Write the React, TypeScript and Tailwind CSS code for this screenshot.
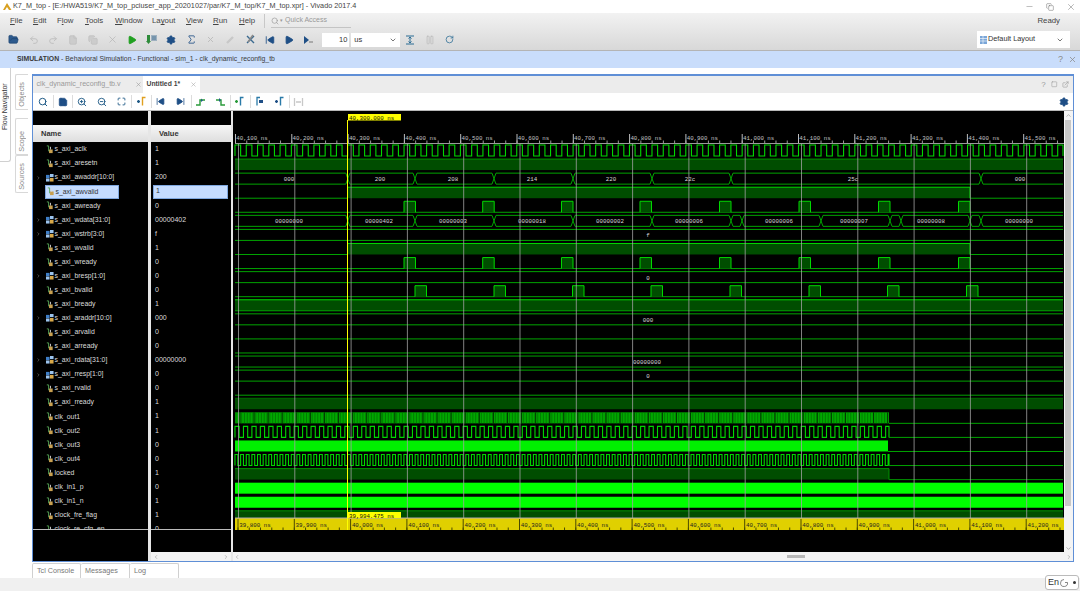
import React from "react";
import { Search, Save, ZoomIn, ZoomOut, Maximize, FolderOpen, Undo2, Redo2, File, Copy, X, Play, Settings, Sigma, ChevronDown, ChevronRight, ChevronLeft, ChevronUp, SkipBack, SkipForward, RotateCw, Pause, Minus, Square, ExternalLink } from "lucide-react";

type Row = { n: string; v: string; bus?: boolean; sel?: boolean };
const rows: Row[] = [
  { n: "s_axi_aclk", v: "1" }, { n: "s_axi_aresetn", v: "1" }, { n: "s_axi_awaddr[10:0]", v: "200", bus: true },
  { n: "s_axi_awvalid", v: "1", sel: true }, { n: "s_axi_awready", v: "0" }, { n: "s_axi_wdata[31:0]", v: "00000402", bus: true },
  { n: "s_axi_wstrb[3:0]", v: "f", bus: true }, { n: "s_axi_wvalid", v: "1" }, { n: "s_axi_wready", v: "0" },
  { n: "s_axi_bresp[1:0]", v: "0", bus: true }, { n: "s_axi_bvalid", v: "0" }, { n: "s_axi_bready", v: "1" },
  { n: "s_axi_araddr[10:0]", v: "000", bus: true }, { n: "s_axi_arvalid", v: "0" }, { n: "s_axi_arready", v: "0" },
  { n: "s_axi_rdata[31:0]", v: "00000000", bus: true }, { n: "s_axi_rresp[1:0]", v: "0", bus: true }, { n: "s_axi_rvalid", v: "0" },
  { n: "s_axi_rready", v: "1" }, { n: "clk_out1", v: "1" }, { n: "clk_out2", v: "1" }, { n: "clk_out3", v: "0" },
  { n: "clk_out4", v: "0" }, { n: "locked", v: "1" }, { n: "clk_in1_p", v: "0" }, { n: "clk_in1_n", v: "1" },
  { n: "clock_fre_flag", v: "1" }, { n: "clock_re_cfg_en", v: "0" },
];

const SigIcon = ({ bus }: { bus?: boolean }) =>
  bus ? (
    <svg width="8" height="8" viewBox="0 0 9 9" className="shrink-0">
      <rect x="0" y="1" width="4" height="3.5" fill="#3f7fc8" />
      <rect x="4.5" y="0" width="4" height="3.5" fill="#9cc4ee" />
      <rect x="0" y="5" width="4" height="3.5" fill="#9cc4ee" />
      <rect x="4.5" y="4.5" width="4" height="4" fill="#d8a848" />
    </svg>
  ) : (
    <svg width="7" height="9" viewBox="0 0 7 10" className="shrink-0">
      <path d="M0.5 1H2.5V7" stroke="#58a858" strokeWidth="1" fill="none" />
      <rect x="3" y="5" width="4" height="4" fill="#c8a050" />
      <rect x="4" y="2" width="1" height="3" fill="#dddddd" />
    </svg>
  );

const xs = (s: number, e: number, step: number) => {
  const o: number[] = [];
  for (let x = s; x < e; x += step) o.push(x);
  return o;
};
const clock = (start: number, end: number, period: number, hi: number, lo: number) => {
  let d = `M${start} ${lo}`;
  for (let x = start; x < end; x += period) {
    const m = Math.min(x + period / 2, end);
    const n = Math.min(x + period, end);
    d += `L${x} ${hi}L${m} ${hi}L${m} ${lo}L${n} ${lo}`;
  }
  return d;
};

const L = 235, R = 1063, G = "#00a400", B = "#00d800", FILL = "#004d00";
const MONO = "'Liberation Mono', monospace";
const hiY = (i: number) => 145 + 14.07 * i;
const loY = (i: number) => 156 + 14.07 * i;

const Low = ({ i, a = L, b = R }: { i: number; a?: number; b?: number }) => (
  <line x1={a} x2={b} y1={loY(i)} y2={loY(i)} stroke={G} strokeWidth="1" />
);
const HighFill = ({ i, a, b, c = B }: { i: number; a: number; b: number; c?: string }) => (
  <>
    <rect x={a} y={hiY(i)} width={b - a} height={11} fill={FILL} />
    <line x1={a} x2={b} y1={hiY(i)} y2={hiY(i)} stroke={c} strokeWidth="1" />
  </>
);
const Valid = ({ i }: { i: number }) => (
  <>
    <Low i={i} a={L} b={347.5} />
    <line x1="347.5" x2="347.5" y1={hiY(i)} y2={loY(i)} stroke={B} />
    <HighFill i={i} a={347.5} b={970} />
    <line x1="970" x2="970" y1={hiY(i)} y2={loY(i)} stroke={B} />
    <Low i={i} a={970} b={R} />
  </>
);
const Pulses = ({ i, at }: { i: number; at: number[] }) => (
  <>
    <Low i={i} />
    {at.map((x) => (
      <g key={x}>
        <rect x={x} y={hiY(i)} width={11.5} height={11} fill={FILL} />
        <path d={`M${x} ${loY(i)}V${hiY(i)}H${x + 11.5}V${loY(i)}`} fill="none" stroke={B} />
      </g>
    ))}
  </>
);
const Bus = ({ i, t, labels }: { i: number; t: number[]; labels: [number, string][] }) => {
  const h = hiY(i), l = loY(i), pts = [L, ...t, R];
  const w = 2;
  return (
    <>
      {pts.slice(0, -1).map((a, k) => {
        const b = pts[k + 1];
        const a2 = k === 0 ? a : a + w, b2 = k === pts.length - 2 ? b : b - w;
        return <path key={a} d={`M${a2} ${h}H${b2}M${a2} ${l}H${b2}`} stroke={G} fill="none" />;
      })}
      {t.map((x) => (
        <path key={x} d={`M${x - w} ${h}L${x + w} ${l}M${x - w} ${l}L${x + w} ${h}`} stroke={G} fill="none" />
      ))}
      {labels.map(([x, s], k) => (
        <text key={k} x={x} y={h + 8} textAnchor="middle" fill="#d8d8d8" fontSize="5.8" fontFamily={MONO}>{s}</text>
      ))}
    </>
  );
};

const grid = xs(238.5, 1064, 56.3);
const topTicks = xs(235.5, 1064, 56.3);
const topNames = ["40,100", "40,200", "40,300", "40,400", "40,500", "40,600", "40,700", "40,800", "40,900", "41,000", "41,100", "41,200", "41,300", "41,400", "41,500"];
const botNames = ["39,800", "39,900", "40,000", "40,100", "40,200", "40,300", "40,400", "40,500", "40,600", "40,700", "40,800", "40,900", "41,000", "41,100", "41,200"];
const awr = [404, 482.7, 561.5, 640, 719.5, 799, 878.5, 958.5];
const bvl = [415, 494, 572.5, 651, 730, 809, 887.5, 966.5];

const Waves = () => (
  <svg viewBox="233 111 831 441" className="block w-[831px] h-[441px] bg-black shrink-0">
    <line x1="235" x2="1064" y1="143.5" y2="143.5" stroke="#9a9a9a" />
    {xs(235.5, 1064, 11.26).map((x) => <line key={x} x1={x} x2={x} y1="140.5" y2="143" stroke="#9a9a9a" />)}
    {topTicks.map((x, i) => (
      <g key={x}>
        <line x1={x} x2={x} y1="134" y2="143" stroke="#bdbdbd" />
        <text x={x + 0.8} y="139.5" fill="#c4c4c4" fontSize="5.8" fontFamily={MONO}>{topNames[i]} ns</text>
      </g>
    ))}
    <path d={clock(L, R, 11.27, hiY(0), loY(0))} stroke={B} strokeWidth="1.1" fill="none" />
    <HighFill i={1} a={L} b={R} c="#009400" />
    <Bus i={2} t={[347.8, 415, 494, 573, 652, 731, 981]} labels={[[289, "000"], [380, "200"], [453, "208"], [532, "214"], [611, "220"], [690, "22c"], [853, "25c"], [1020, "000"]]} />
    <Valid i={3} />
    <Pulses i={4} at={awr} />
    <Bus i={5} t={[347.8, 415, 494, 573, 652, 731, 742, 821, 890, 901, 970, 981]} labels={[[289, "00000000"], [379, "00000402"], [453, "00000003"], [532, "00000018"], [610, "00000002"], [689, "00000006"], [779, "00000006"], [854, "00000007"], [931, "00000008"], [1019, "00000000"]]} />
    <Bus i={6} t={[]} labels={[[648, "f"]]} />
    <Valid i={7} />
    <Pulses i={8} at={awr} />
    <Bus i={9} t={[]} labels={[[648, "0"]]} />
    <Pulses i={10} at={bvl} />
    <HighFill i={11} a={L} b={R} />
    <Low i={11} />
    <Bus i={12} t={[]} labels={[[648, "000"]]} />
    <Low i={13} />
    <Low i={14} />
    <Bus i={15} t={[]} labels={[[647, "00000000"]]} />
    <Bus i={16} t={[]} labels={[[648, "0"]]} />
    <Low i={17} />
    <HighFill i={18} a={L} b={R} c="#006a00" />
    {/* clk_out1: dense clock with beat gaps */}
    <rect x={L} y={hiY(19)} width={654} height={11} fill="#00a800" />
    {xs(L + 1, 889, 2.82).map((x) => <line key={x} x1={x} x2={x} y1={hiY(19)} y2={loY(19)} stroke="#006c00" strokeWidth="0.7" />)}
    {xs(L + 5, 889, 14.08).map((x) => <line key={x} x1={x} x2={x} y1={hiY(19)} y2={loY(19)} stroke="#002000" strokeWidth="0.8" />)}
    <Low i={19} a={889} />
    <path d={clock(L, 889, 8.45, hiY(20), loY(20))} stroke={B} strokeWidth="1.1" fill="none" />
    <Low i={20} a={889} />
    <rect x={L} y={hiY(21)} width={653} height={11} fill="#00f000" />
    <Low i={21} a={888} />
    <path d={clock(L, 889, 5.63, hiY(22), loY(22))} stroke={B} strokeWidth="1.1" fill="none" />
    <Low i={22} a={889} />
    <rect x={L} y={hiY(23)} width={654} height={11} fill={FILL} />
    <path d={`M${L} ${hiY(23)}H889V${loY(23)}H${R}`} stroke="#009400" fill="none" />
    <rect x={L} y={hiY(24)} width={R - L} height={11} fill="#00ff00" />
    <rect x={L} y={hiY(25)} width={R - L} height={11} fill="#00ff00" />
    <rect x={L} y={hiY(26)} width={R - L} height={7} fill={FILL} />
    <line x1={L} x2={R} y1={hiY(26)} y2={hiY(26)} stroke="#009400" />
    {grid.map((x) => <line key={x} x1={x} x2={x} y1="143" y2="518" stroke="#a0a0a0" strokeOpacity="0.8" />)}
    <rect x="235" y="518" width="829" height="12" fill="#e0d000" />
    <line x1="235" x2="1064" y1="518" y2="518" stroke="#b0b0b0" />
    {xs(238, 1064, 11.26).map((x) => <line key={x} x1={x} x2={x} y1="527.5" y2="530" stroke="#4a4a00" />)}
    {grid.map((x, i) => (
      <g key={x}>
        <line x1={x - 0.5} x2={x - 0.5} y1="519" y2="530" stroke="#4a4a00" />
        <text x={x + 0.8} y="526.5" fill="#222" fontSize="5.8" fontFamily={MONO}>{botNames[i]} ns</text>
      </g>
    ))}
    <line x1="347.5" x2="347.5" y1="120" y2="530" stroke="#ffff00" />
    <rect x="348" y="114" width="53" height="6.5" fill="#ffff00" />
    <text x="349" y="120" fill="#111" fontSize="5.8" fontFamily={MONO}>40,300.000 ns</text>
    <rect x="348" y="512" width="53" height="6" fill="#ffff00" />
    <text x="349" y="518" fill="#111" fontSize="5.8" fontFamily={MONO}>39,994.475 ns</text>
  </svg>
);

const Tb = ({ children }: { children: React.ReactNode }) => (
  <span className="w-[19.7px] flex justify-center items-center shrink-0">{children}</span>
);
const Sep = () => <span className="w-px h-[13px] bg-[#dcdcdc] -mr-px shrink-0" />;

const Marker = ({ c1, c2 }: { c1: string; c2: string }) => (
  <svg width="11" height="11" viewBox="0 0 11 11">
    <path d="M1 5.5H4M2.5 4V7" stroke={c1} strokeWidth="1.4" />
    <path d="M9.5 1.5H6.5V9.5" stroke={c2} strokeWidth="1.4" fill="none" />
  </svg>
);

const Menu = ({ w, a, b, c }: { w: string; a: string; b: string; c: string }) => (
  <span className={w}>{a}<span className="underline decoration-[0.5px] underline-offset-1">{b}</span>{c}</span>
);

export default function App() {
  return (
    <div className="relative w-[1080px] h-[591px] overflow-hidden bg-white flex flex-col text-[#333] font-['Liberation_Sans',Arial,sans-serif] text-[7.5px]">
      <div className="h-[13px] flex items-center pl-[3px] shrink-0">
        <svg width="9" height="9" viewBox="0 0 9 9" className="mr-[1px]"><path d="M0 8L4 1L8.5 8H6L4 5L2 8Z" fill="#d8a020" /></svg>
        <span className="text-[7.25px] text-[#444]">K7_M_top - [E:/HWA519/K7_M_top_pciuser_app_20201027/par/K7_M_top/K7_M_top.xpr] - Vivado 2017.4</span>
        <div className="ml-auto flex items-center gap-[12px] pr-[4px] text-[#555]">
          <Minus size={9} strokeWidth={1} />
          <Copy size={8} strokeWidth={1.3} />
          <X size={10} strokeWidth={1} />
        </div>
      </div>
      <div className="h-[38px] shrink-0 flex flex-col bg-gradient-to-b from-[#f2f2f2] to-[#d8d8d8] border-b border-[#b4b4b4]">
        <div className="h-[16px] flex items-center pl-[10px] text-[7.8px] text-[#444]">
          <Menu w="w-[23px]" a="" b="F" c="ile" />
          <Menu w="w-[24px]" a="" b="E" c="dit" />
          <Menu w="w-[28px]" a="F" b="l" c="ow" />
          <Menu w="w-[30px]" a="" b="T" c="ools" />
          <Menu w="w-[37px]" a="" b="W" c="indow" />
          <Menu w="w-[34px]" a="La" b="y" c="out" />
          <Menu w="w-[27px]" a="" b="V" c="iew" />
          <Menu w="w-[26px]" a="" b="R" c="un" />
          <Menu w="w-[25px]" a="" b="H" c="elp" />
          <span className="w-px h-[14px] bg-[#c8c8c8]" />
          <span className="ml-[6px] w-[80px] h-[14px] border-b border-[#c4c4c4] flex items-center gap-[1px] text-[#999]">
            <Search size={8} strokeWidth={2} />
            <span className="text-[5px]">▾</span>
            <span className="text-[7px] ml-[1px]">Quick Access</span>
          </span>
          <span className="ml-auto mr-[20px] text-[#444]">Ready</span>
        </div>
        <div className="h-[21px] flex items-center pl-[4px]">
          <Tb><FolderOpen size={11} fill="#2d5a8e" stroke="#1f4470" strokeWidth={1.5} /></Tb>
          <Tb><Undo2 size={10} stroke="#c0c0c0" strokeWidth={2.4} /></Tb>
          <Tb><Redo2 size={10} stroke="#c0c0c0" strokeWidth={2.4} /></Tb>
          <Tb><File size={10} stroke="#c0c0c0" fill="#cccccc" /></Tb>
          <Tb><Copy size={10} stroke="#c0c0c0" fill="#cccccc" /></Tb>
          <Tb><X size={11} stroke="#b0b0b0" strokeWidth={1.4} /></Tb>
          <Tb><Play size={10} fill="#20a020" stroke="#20a020" /></Tb>
          <Tb>
            <svg width="11" height="11" viewBox="0 0 11 11"><rect x="1" y="1" width="3" height="6" fill="#2e8b3a" /><path d="M2.5 10L0 7H5Z" fill="#2e8b3a" /><path d="M6 1V7M8 1V7M10 1V7M6 3H10M6 5H10" stroke="#3a6a90" strokeWidth="0.8" /></svg>
          </Tb>
          <Tb><Settings size={10} fill="#1f4f86" stroke="#1f4f86" strokeWidth={2.4} /></Tb>
          <Tb><Sigma size={11} stroke="#1f4f86" strokeWidth={1.8} /></Tb>
          <Tb><X size={9} stroke="#bcbcbc" strokeWidth={2.5} /></Tb>
          <Tb><svg width="10" height="10" viewBox="0 0 10 10"><path d="M2 8L8 2" stroke="#c8c8c8" strokeWidth="2.4" /></svg></Tb>
          <Tb><svg width="11" height="11" viewBox="0 0 11 11"><path d="M2 2L9 9M9 2L2 9" stroke="#3a6a90" strokeWidth="1.4" /><path d="M8 1L3 8" stroke="#888" strokeWidth="1.6" /></svg></Tb>
          <Tb><SkipBack size={10} fill="#1f4f86" stroke="#1f4f86" /></Tb>
          <Tb><Play size={10} fill="#1f4f86" stroke="#1f4f86" /></Tb>
          <span className="w-[18px] flex justify-center shrink-0"><svg width="11" height="10" viewBox="0 0 11 10"><path d="M1 1L6 5L1 9Z" fill="#1f4f86" /><path d="M7 8V6M9 8V6" stroke="#777" /></svg></span>
          <span className="ml-[5px] w-[27px] h-[14px] bg-white text-right pr-[2px] leading-[14px] text-[#333] text-[7.5px]">10</span>
          <span className="ml-[2px] w-[49px] h-[14px] bg-white flex items-center pl-[3px] text-[7.5px] text-[#333]">us<ChevronDown size={8} className="ml-auto mr-[3px]" /></span>
          <Tb>
            <svg width="10" height="10" viewBox="0 0 10 10"><path d="M1 1H9M1 9H9M5 2V8M3.5 3.5L5 2L6.5 3.5M3.5 6.5L5 8L6.5 6.5" stroke="#2b6c94" fill="none" /></svg>
          </Tb>
          <Tb><Pause size={10} stroke="#bdbdbd" /></Tb>
          <Tb><RotateCw size={9} stroke="#2b6c94" strokeWidth={2} /></Tb>
          <span className="ml-auto mr-[10px] w-[93px] h-[17px] bg-white flex items-center pl-[3px] text-[7.3px] text-[#333]">
            <svg width="7" height="8" viewBox="0 0 7 8" className="mr-[1px]"><rect width="7" height="8" fill="#7aa6d8" /><path d="M0 2.5H7M0 5H7M3 0V8" stroke="#fff" strokeWidth="0.6" /></svg>
            Default Layout
            <ChevronDown size={8} className="ml-auto mr-[6px]" />
          </span>
        </div>
      </div>
      <div className="h-[17px] shrink-0 bg-[#c9ddfb] flex items-center pl-[17px] text-[6.85px] text-[#3a3a3a]">
        <b className="font-bold">SIMULATION</b>
        <span className="ml-[2px]">- Behavioral Simulation - Functional - sim_1 - clk_dynamic_reconfig_tb</span>
        <div className="ml-auto flex items-center gap-[5px] pr-[3px] text-[#8a8a8a]">
          <span className="text-[9px]">?</span>
          <X size={9} />
        </div>
      </div>
      <div className="flex-1 flex min-h-0">
        <div className="w-[32px] shrink-0 flex">
          <div className="w-[11px] h-[94px] border-r border-b border-[#d0d0d0] rounded-br-[3px] flex justify-center pt-[16px]">
            <span className="[writing-mode:vertical-rl] rotate-180 text-[7px] text-[#333] whitespace-nowrap h-[46px] leading-[10px]">Flow Navigator</span>
          </div>
          <div className="ml-[4px] mt-[6px] w-[13px] flex flex-col text-[#8a8a8a]">
            <span className="h-[36px] border border-r-0 border-[#d8d8d8] rounded-l-[2px] flex items-end justify-center pb-[2px]"><span className="[writing-mode:vertical-rl] rotate-180 text-[7.3px] leading-[10px]">Objects</span></span>
            <span className="mt-[8px] h-[37px] border border-r-0 border-[#d8d8d8] rounded-l-[2px] flex items-end justify-center pb-[2px]"><span className="[writing-mode:vertical-rl] rotate-180 text-[7.3px] leading-[10px]">Scope</span></span>
            <span className="h-[38px] border border-r-0 border-[#d8d8d8] rounded-l-[2px] flex items-end justify-center pb-[2px]"><span className="[writing-mode:vertical-rl] rotate-180 text-[7.3px] leading-[10px]">Sources</span></span>
          </div>
        </div>
        <div className="flex-1 flex flex-col min-w-0 pr-[6.5px] pt-[6px]">
          <div className="h-[488px] shrink-0 border border-t-2 border-[#5f8fd6] flex flex-col">
            <div className="h-[17px] shrink-0 bg-[#ececec] flex items-stretch">
              <span className="w-[110px] flex items-center pl-[3.5px] text-[7.15px] text-[#9a9a9a]">
                clk_dynamic_reconfig_tb.v
                <X size={7} className="ml-auto mr-[1px]" />
              </span>
              <span className="w-[57px] bg-white flex items-center pl-[3.5px] text-[6.8px] font-bold text-[#444]">
                Untitled 1*
                <X size={7} strokeWidth={2} className="ml-auto mr-[3px] text-[#aaa]" />
              </span>
              <div className="ml-auto flex items-center gap-[4px] pr-[4px] text-[#999]">
                <span className="text-[8px] w-[7px] text-center">?</span>
                <Square size={6.5} />
                <ExternalLink size={7} />
              </div>
            </div>
            <div className="h-[18px] shrink-0 flex items-center border-b border-[#b8b8b8]">
              <Tb><Search size={10} stroke="#1f5a86" strokeWidth={2.4} /></Tb><Sep />
              <Tb><Save size={10} fill="#1f4f86" stroke="#1f4f86" strokeWidth={1.6} /></Tb><Sep />
              <Tb><ZoomIn size={10} stroke="#1f5a86" strokeWidth={2.2} /></Tb>
              <Tb><ZoomOut size={10} stroke="#1f5a86" strokeWidth={2.2} /></Tb>
              <Tb><Maximize size={9} stroke="#1f5a86" strokeWidth={2.4} /></Tb><Sep />
              <Tb><Marker c1="#1f5a86" c2="#e0a020" /></Tb><Sep />
              <Tb><SkipBack size={9} fill="#1f4f86" stroke="#1f4f86" /></Tb>
              <Tb><SkipForward size={9} fill="#1f4f86" stroke="#1f4f86" /></Tb><Sep />
              <Tb><svg width="11" height="10" viewBox="0 0 11 10"><path d="M1 8H5V3H10" stroke="#2a9a3a" strokeWidth="1.4" fill="none" /><path d="M6 1.5L8 3.5L6 5" fill="#1f5a86" /></svg></Tb>
              <Tb><svg width="11" height="10" viewBox="0 0 11 10"><path d="M1 3H6V8H10" stroke="#2a9a3a" strokeWidth="1.4" fill="none" /><path d="M4 1L6 3L4 5" fill="#1f5a86" /></svg></Tb><Sep />
              <Tb><Marker c1="#2a9a3a" c2="#2a7aa8" /></Tb><Sep />
              <Tb><svg width="11" height="11" viewBox="0 0 11 11"><path d="M3 9.5V1.5H6" stroke="#2a7aa8" strokeWidth="1.3" fill="none" /><path d="M5 4H9V7H5Z" fill="#1f4f86" /></svg></Tb>
              <Tb><Marker c1="#1f4f86" c2="#2a7aa8" /></Tb><Sep />
              <Tb><svg width="11" height="10" viewBox="0 0 11 10"><path d="M1.5 1V9M9.5 1V9M3 5H8" stroke="#c8c8c8" strokeWidth="1.3" /></svg></Tb>
              <span className="ml-auto mr-[4px]"><Settings size={10} fill="#1f4f86" stroke="#1f4f86" strokeWidth={2.4} /></span>
            </div>
            <div className="flex-1 min-h-0 flex">
              <div className="w-[115px] shrink-0 bg-black flex flex-col">
                <div className="h-[14px] shrink-0" />
                <div className="h-[17px] shrink-0 bg-gradient-to-b from-[#f6f6f6] to-[#dedede] flex items-center pl-[8px] font-bold text-[7.5px] text-[#333]">Name</div>
                <div className="h-[388px] shrink-0 overflow-hidden border-b border-[#bcbcbc]">
                  {rows.map((r) => (
                    <div key={r.n} className="h-[14.07px] pt-[1px] flex items-center text-[6.9px] text-[#dcdcdc]">
                      <span className="w-[5px] ml-[3px] mr-[4.5px] flex items-center">{r.bus && <ChevronRight size={6} stroke="#aaa" strokeWidth={2} />}</span>
                      <span className={r.sel ? "flex items-center h-[14px] w-[74px] bg-[#c5dcff] border border-[#7fa8e0] -ml-[1px] pl-[1px] text-[#333]" : "flex items-center"}>
                        <SigIcon bus={r.bus} />
                        <span className={r.bus ? "ml-[1px]" : "ml-[2px]"}>{r.n}</span>
                      </span>
                    </div>
                  ))}
                </div>
              </div>
              <div className="w-[3px] shrink-0 bg-[#e6e6e6]" />
              <div className="w-[79.5px] shrink-0 flex flex-col">
                <div className="h-[14px] shrink-0 bg-black" />
                <div className="h-[17px] shrink-0 bg-gradient-to-b from-[#f6f6f6] to-[#dedede] flex items-center pl-[8px] font-bold text-[7.5px] text-[#333]">Value</div>
                <div className="h-[388px] shrink-0 overflow-hidden bg-black border-b border-[#bcbcbc]">
                  {rows.map((r) => (
                    <div key={r.n} className="h-[14.07px] pt-[1px] flex items-center text-[7px] text-[#dcdcdc]">
                      <span className={r.sel ? "ml-[2px] pl-[2px] w-[75px] h-[14px] bg-[#c5dcff] border border-[#7fa8e0] flex items-center text-[#333]" : "ml-[4px]"}>{r.v}</span>
                    </div>
                  ))}
                </div>
                <div className="h-[22px] shrink-0 bg-black" />
                <div className="flex-1 bg-[#f4f4f4] flex items-center justify-between px-[2px] text-[#888]">
                  <ChevronLeft size={6} /><ChevronRight size={6} />
                </div>
              </div>
              <div className="w-[2.5px] shrink-0 bg-[#e6e6e6]" />
              <div className="flex-1 min-w-0 flex flex-col">
                <div className="flex">
                  <Waves />
                  <div className="flex-1 bg-[#f4f4f4] flex flex-col items-center text-[#888]">
                    <ChevronUp size={7} className="mt-[1px]" />
                    <div className="w-[6px] h-[386px] bg-[#c8c8c8] mt-[1px]" />
                    <ChevronDown size={7} className="mt-auto" />
                  </div>
                </div>
                <div className="flex-1 bg-[#f4f4f4] flex items-center text-[#888] px-[1px]">
                  <ChevronLeft size={6} />
                  <span className="ml-[547px] w-[18px] h-[3px] bg-[#b8b8b8]" />
                  <ChevronRight size={6} className="ml-auto" />
                </div>
              </div>
            </div>
          </div>
          <div className="h-[16px] shrink-0 flex mt-[1px] text-[7.2px] text-[#777]">
            <span className="w-[49px] border border-b-0 border-[#d0d0d0] rounded-t-[2px] flex items-center pl-[4px]">Tcl Console</span>
            <span className="w-[49px] border border-b-0 border-l-0 border-[#d0d0d0] rounded-t-[2px] flex items-center pl-[4px]">Messages</span>
            <span className="w-[49px] border border-b-0 border-l-0 border-[#d0d0d0] rounded-t-[2px] flex items-center pl-[4px]">Log</span>
          </div>
        </div>
      </div>
      <div className="h-[13px] shrink-0 bg-[#f0f0f0]" />
      <div className="absolute right-[1px] bottom-[1px] w-[34px] h-[15px] bg-white border border-[#bbb] rounded-[3px] flex items-center pl-[2px] text-[9px] text-[#333]">
        En
        <svg width="9" height="9" viewBox="0 0 9 9" className="ml-[1px]"><path d="M4 1.5A3.5 3.5 0 1 0 7.5 4.5L5 4.5" stroke="#555" strokeWidth="0.7" fill="none" /></svg>
        <span className="ml-[4px] w-[3px] h-[3px] rounded-full bg-[#333]" />
      </div>
    </div>
  );
}
